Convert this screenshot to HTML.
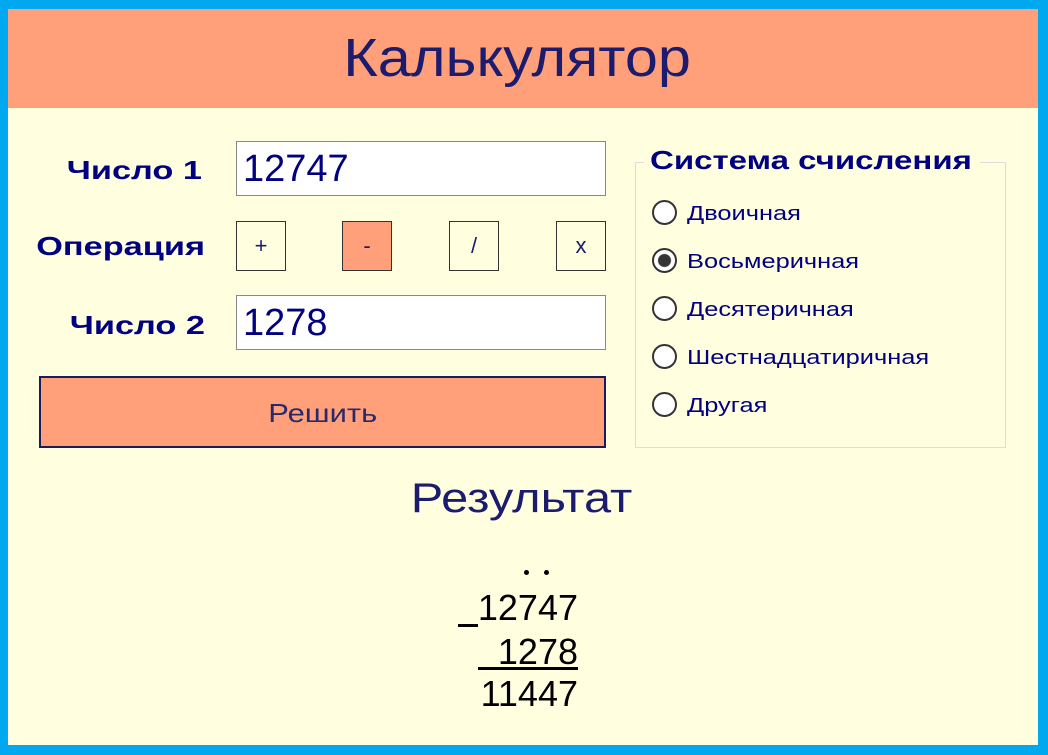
<!DOCTYPE html>
<html><head><meta charset="utf-8"><style>
*{margin:0;padding:0;box-sizing:border-box}
body{width:1048px;height:755px;background:#00a8f0;position:relative;overflow:hidden;font-family:"Liberation Sans","DejaVu Sans",sans-serif}
#app{position:absolute;left:8px;top:9px;width:1030px;height:736px;background:#ffffe0}
#hdr{position:absolute;left:0;top:0;width:1030px;height:99px;background:#ffa07a;text-align:center;color:#1c1c6e;font-size:54px;line-height:99px}
#hdr span{display:inline-block;transform:scaleX(1.1);position:relative;left:-6px}
.a{position:absolute}
.lbl{color:#000080;font-weight:bold;font-size:26px;text-align:right;width:200px;transform:scaleX(1.32);transform-origin:right center}
.inp{background:#fff;border:1px solid #888;width:370px;height:55px;color:#000080;font-size:38px;line-height:55px;padding-left:6px}
.op{width:50px;height:50px;border:1px solid #333;color:#1c1c6e;font-size:22px;text-align:center;line-height:48px}
.r{left:652px;font-size:20px;color:#000080;height:26px;line-height:26px}
.r i{display:inline-block;width:25px;height:25px;border:2px solid #333;border-radius:50%;background:#fff;vertical-align:middle;margin-right:10px;position:relative;top:-2px}
.r span{display:inline-block;transform:scaleX(1.27);transform-origin:left center}
.calc{font-size:36px;color:#000;line-height:40px}
</style></head><body>
<div id="app"><div id="hdr"><span>Калькулятор</span></div></div>
<div class="a lbl" style="left:2px;top:155px">Число 1</div>
<div class="a lbl" style="left:5px;top:231px">Операция</div>
<div class="a lbl" style="left:5px;top:310px">Число 2</div>
<div class="a inp" style="left:236px;top:141px">12747</div>
<div class="a inp" style="left:236px;top:295px">1278</div>
<div class="a op" style="left:236px;top:221px">+</div>
<div class="a op" style="left:342px;top:221px;background:#ffa07a">-</div>
<div class="a op" style="left:449px;top:221px">/</div>
<div class="a op" style="left:556px;top:221px">x</div>
<div class="a" style="left:39px;top:376px;width:567px;height:72px;background:#ffa07a;border:2px solid #1c1c5a;color:#2a2a6a;font-size:26px;text-align:center;line-height:70px"><span style="display:inline-block;transform:scaleX(1.19)">Решить</span></div>
<div class="a" style="left:635px;top:162px;width:371px;height:286px;border:1px solid #ddd"></div>
<div class="a" style="left:644px;top:145px;width:336px;height:34px;background:#ffffe0"></div>
<div class="a" style="left:650px;top:145px;color:#000080;font-weight:bold;font-size:26px;transform:scaleX(1.27);transform-origin:left center">Система счисления</div>
<div class="a r" style="top:201px"><i></i><span>Двоичная</span></div>
<div class="a r" style="top:249px"><i style="background:radial-gradient(circle,#333 0 6px,#fff 7px)"></i><span>Восьмеричная</span></div>
<div class="a r" style="top:297px"><i></i><span>Десятеричная</span></div>
<div class="a r" style="top:345px"><i></i><span>Шестнадцатиричная</span></div>
<div class="a r" style="top:393px"><i></i><span>Другая</span></div>
<div class="a" style="left:0;width:1048px;top:474px;text-align:center;color:#1c1c6e;font-size:42px"><span style="display:inline-block;transform:scaleX(1.16);position:relative;left:-2px">Результат</span></div>
<div class="a" style="left:524px;top:570px;width:5px;height:5px;border-radius:50%;background:#000"></div>
<div class="a" style="left:544px;top:570px;width:5px;height:5px;border-radius:50%;background:#000"></div>
<div class="a" style="left:458px;top:624px;width:20px;height:3px;background:#000"></div>
<div class="a calc" style="left:458px;top:588px;width:120px;text-align:right">12747</div>
<div class="a calc" style="left:458px;top:632px;width:120px;text-align:right">1278</div>
<div class="a" style="left:478px;top:667px;width:100px;height:3px;background:#000"></div>
<div class="a calc" style="left:458px;top:674px;width:120px;text-align:right">11447</div>
</body></html>
